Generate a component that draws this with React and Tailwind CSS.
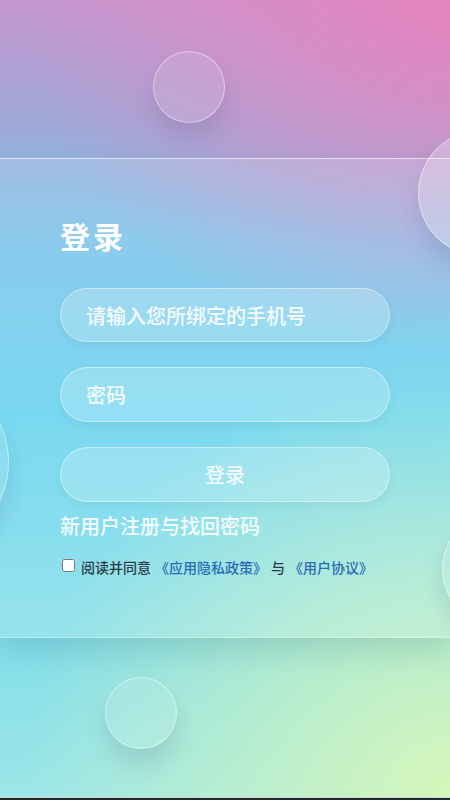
import React from "react";
import { useState } from "react";

const font = { fontFamily: '"Noto Sans CJK SC", "Noto Sans", sans-serif' };

function Bubble({ className }) {
  return (
    <div
      className={
        "absolute rounded-full border border-white/45 bg-white/10 shadow-[0_16px_22px_rgba(40,40,90,0.12)] " +
        className
      }
    />
  );
}

export default function App() {
  const [phone, setPhone] = useState("");
  const [password, setPassword] = useState("");
  const [agree, setAgree] = useState(false);

  return (
    <div
      className="relative w-full h-[800px] overflow-hidden flex flex-col bg-[#1d2b2b]"
      style={font}
    >
      <div className="relative flex-1 flex flex-col bg-[radial-gradient(ellipse_95%_44%_at_100%_0%,rgba(232,132,192,0.95),rgba(232,132,192,0)),radial-gradient(ellipse_95%_55%_at_100%_100%,rgba(214,246,186,1),rgba(214,246,186,0)),linear-gradient(180deg,#c496cf_0%,#9eaad8_16%,#78c2ea_30%,#62d2ee_52%,#7edcea_75%,#9ce6e8_100%)]">
        <div className="h-[158px]" />

        <div className="h-[480px] px-[60px] pt-[58px] bg-white/15 border-t border-white/60 border-b border-b-white/30 shadow-[0_14px_26px_rgba(20,70,90,0.14)]">
          <h1 className="text-[30px] leading-[36px] font-bold text-white tracking-[3px]">
            登录
          </h1>

          <form
            className="mt-[35px] flex flex-col gap-[25px]"
            onSubmit={(e) => e.preventDefault()}
          >
            <input
              type="text"
              value={phone}
              onChange={(e) => setPhone(e.target.value)}
              placeholder="请输入您所绑定的手机号"
              className="h-[54px] w-full rounded-full border border-white/40 bg-white/20 pl-[25px] text-[20px] font-medium text-white placeholder:text-white/90 outline-none shadow-[0_4px_10px_rgba(0,60,90,0.06)]"
            />
            <input
              type="password"
              value={password}
              onChange={(e) => setPassword(e.target.value)}
              placeholder="密码"
              className="h-[55px] w-full rounded-full border border-white/40 bg-white/20 pl-[25px] text-[20px] font-medium text-white placeholder:text-white/90 outline-none shadow-[0_4px_10px_rgba(0,60,90,0.06)]"
            />
            <button
              type="submit"
              className="h-[55px] w-full rounded-full border border-white/40 bg-white/20 text-[20px] font-medium text-white/85 shadow-[0_4px_10px_rgba(0,60,90,0.06)]"
            >
              登录
            </button>
          </form>

          <div className="mt-[12px] text-[20px] leading-[24px] font-medium text-white/90">
            新用户注册与找回密码
          </div>

          <label className="mt-[19px] flex items-center text-[14px] leading-[20px] font-medium text-[#2c3a48]">
            <input
              type="checkbox"
              checked={agree}
              onChange={(e) => setAgree(e.target.checked)}
              className="w-[13px] h-[13px] m-0 ml-[2px] mr-[6px] -mt-[4px]"
            />
            <span>阅读并同意</span>
            <span className="ml-[4px] text-[#2a6cb6]">《应用隐私政策》</span>
            <span className="ml-[4px]">与</span>
            <span className="ml-[4px] text-[#2a6cb6]">《用户协议》</span>
          </label>
        </div>

        <Bubble className="left-[153px] top-[51px] w-[72px] h-[72px]" />
        <Bubble className="left-[418px] top-[130px] w-[126px] h-[126px] bg-white/25" />
        <Bubble className="left-[-171px] top-[372px] w-[180px] h-[180px]" />
        <Bubble className="left-[442px] top-[513px] w-[112px] h-[112px]" />
        <Bubble className="left-[105px] top-[677px] w-[72px] h-[72px]" />
      </div>
      <div className="h-[1px] bg-white/80" />
      <div className="h-[2px]" />
    </div>
  );
}
